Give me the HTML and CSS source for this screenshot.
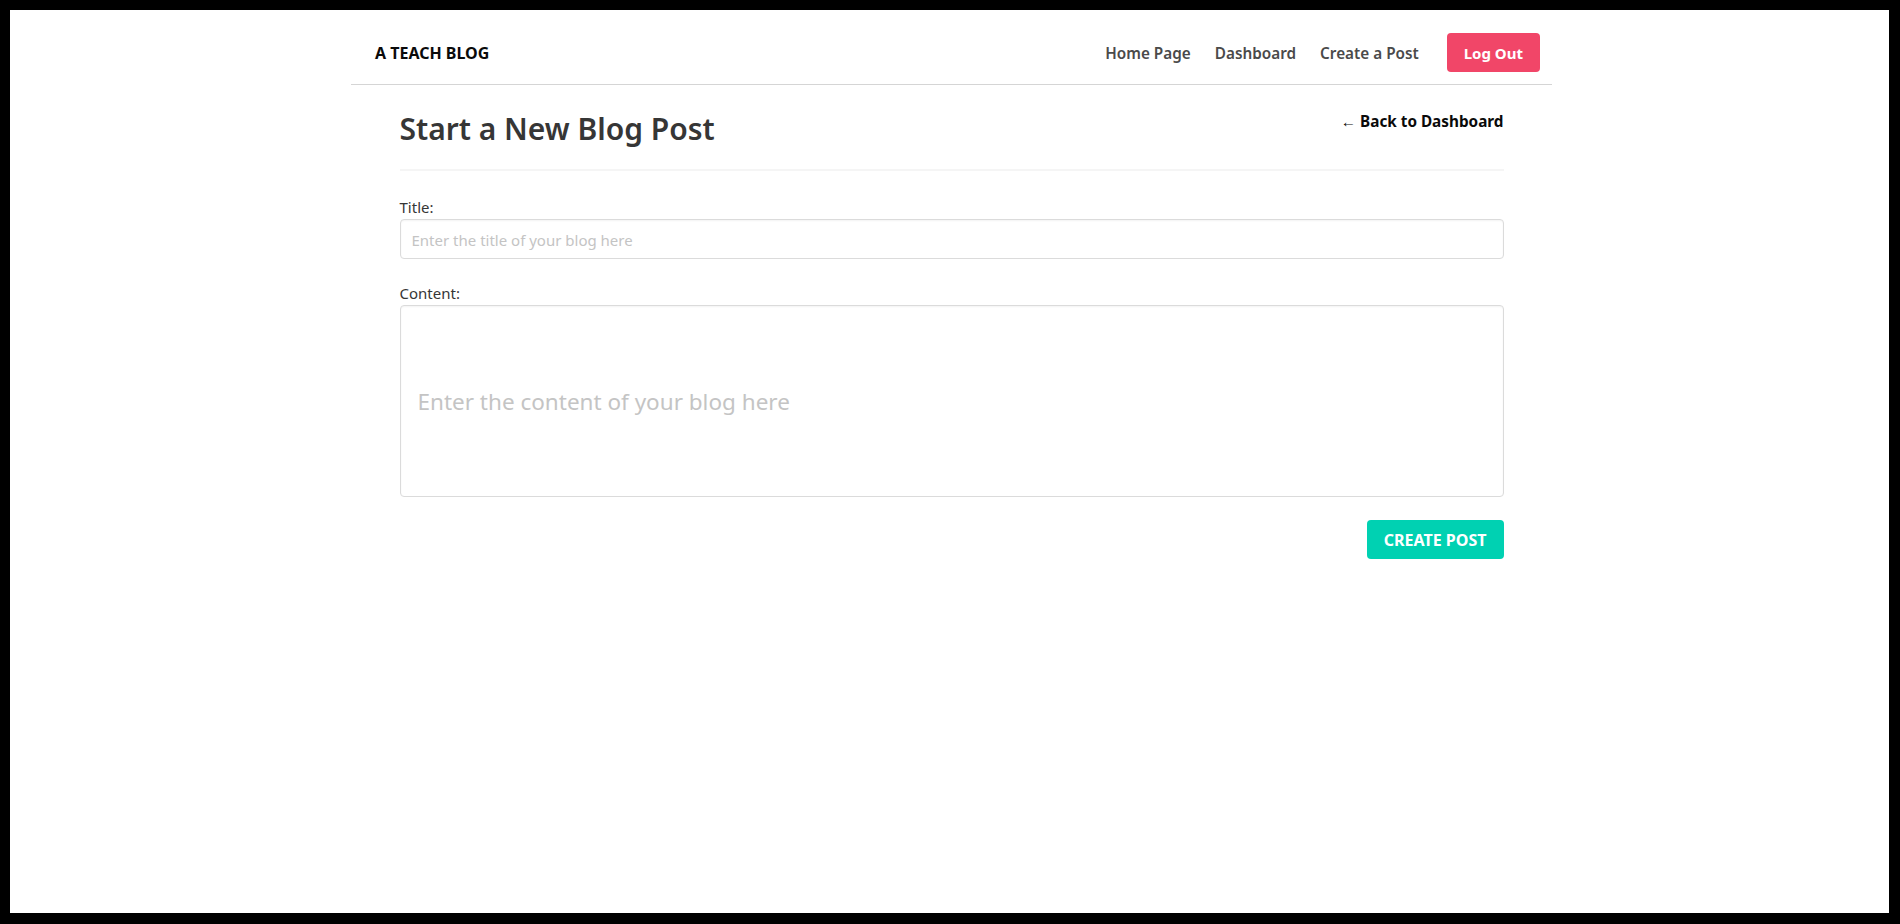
FILE: index.html
```html
<!DOCTYPE html>
<html lang="en">
<head>
<meta charset="utf-8">
<title>A Teach Blog - New Post</title>
<link rel="stylesheet" href="styles.css">
</head>
<body>
<div class="frame">
  <div class="screen">
    <nav class="navbar">
      <a class="brand" href="#">A TEACH BLOG</a>
      <div class="nav-menu">
        <a class="nav-link" href="#">Home Page</a>
        <a class="nav-link" href="#">Dashboard</a>
        <a class="nav-link" href="#">Create a Post</a>
        <a class="btn-logout" href="#">Log Out</a>
      </div>
    </nav>
    <main class="main">
      <div class="page-head">
        <h1 class="page-title">Start a New Blog Post</h1>
        <a class="back-link" href="#">← Back to Dashboard</a>
      </div>
      <hr class="divider">
      <form class="post-form">
        <div class="field">
          <label class="label" for="title">Title:</label>
          <input class="input" id="title" type="text" placeholder="Enter the title of your blog here">
        </div>
        <div class="field">
          <label class="label" for="content">Content:</label>
          <input class="input input-large" id="content" type="text" placeholder="Enter the content of your blog here">
        </div>
        <div class="actions">
          <button class="btn-create" type="button">CREATE POST</button>
        </div>
      </form>
    </main>
  </div>
</div>
</body>
</html>
```

FILE: styles.css
```css
html, body {
  margin: 0;
  padding: 0;
  height: 100%;
}

body {
  background: #000;
  font-family: "Noto Sans", "Open Sans", sans-serif;
  color: #4a4a4a;
}

.frame {
  box-sizing: border-box;
  height: 924px;
  padding: 10px 11px 11px 10px;
}

.screen {
  box-sizing: border-box;
  height: 100%;
  background: #fff;
  padding-left: 4px;
}

a {
  text-decoration: none;
}

.navbar {
  width: 1201px;
  margin: 0 auto;
  box-sizing: border-box;
  display: flex;
  align-items: center;
  justify-content: space-between;
  padding: 23px 12px 12px 24px;
  border-bottom: 1px solid #d5d5d5;
}

.brand {
  font-size: 16px;
  font-weight: 700;
  color: #0a0a0a;
  line-height: 24px;
}

.nav-menu {
  display: flex;
  align-items: center;
}

.nav-link {
  padding: 0 12px;
  font-size: 15.3px;
  font-weight: 600;
  color: #4a4a4a;
  line-height: 24px;
}

.btn-logout {
  margin-left: 16px;
  display: flex;
  align-items: center;
  height: 39px;
  padding: 0 17px;
  border-radius: 4px;
  background: #f14668;
  color: #fff;
  font-size: 15px;
  font-weight: 700;
}

.main {
  width: 1104px;
  margin: 0 auto;
  padding-top: 26px;
}

.page-head {
  display: flex;
  justify-content: space-between;
  align-items: flex-start;
}

.page-title {
  margin: 0;
  font-size: 30px;
  line-height: 36px;
  font-weight: 600;
  color: #363636;
}

.back-link {
  margin-top: -2px;
  font-size: 15.3px;
  line-height: 24px;
  font-weight: 700;
  color: #0a0a0a;
}

.divider {
  border: 0;
  height: 2px;
  background: #f5f5f5;
  margin: 22px 0 24px;
}

.field {
  margin-bottom: 22px;
}

.label {
  display: block;
  font-size: 15px;
  line-height: 24px;
  color: #363636;
}

.input {
  display: block;
  box-sizing: border-box;
  width: 100%;
  height: 40px;
  margin: 0;
  padding: 1px 11px 0;
  border: 1px solid #dbdbdb;
  border-radius: 4px;
  background: #fff;
  font-family: inherit;
  font-size: 15px;
  color: #363636;
  box-shadow: inset 0 1px 2px rgba(10, 10, 10, 0.05);
  outline: none;
}

.input::placeholder {
  color: #c4c4c4;
}

.input-large {
  height: 192px;
  padding: 0 17px;
  font-size: 22.5px;
}

.actions {
  display: flex;
  justify-content: flex-end;
  margin-top: 23px;
}

.btn-create {
  height: 39px;
  padding: 0 17px;
  border: 0;
  border-radius: 4px;
  background: #00d1b2;
  color: #fff;
  font-family: inherit;
  font-size: 16px;
  font-weight: 700;
  cursor: pointer;
}
```
